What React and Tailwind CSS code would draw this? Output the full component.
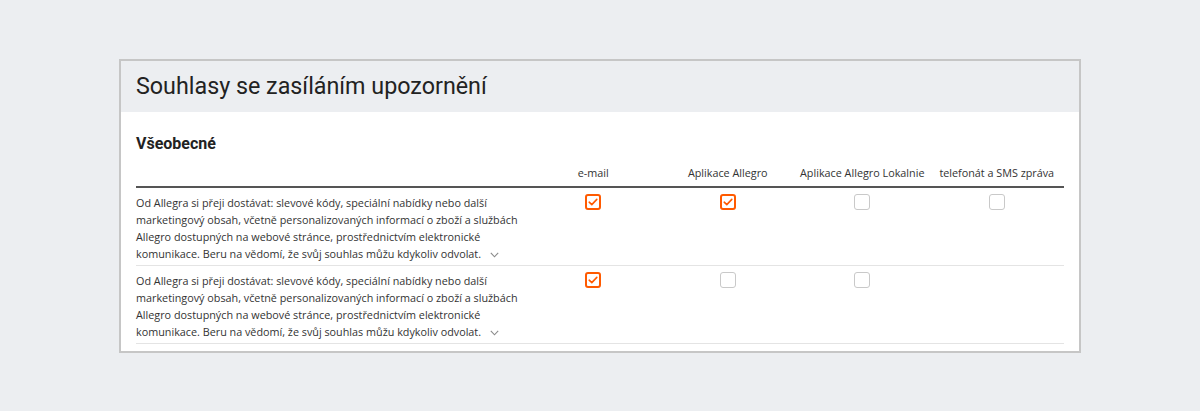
import React from "react";

const columns = ["e-mail", "Aplikace Allegro", "Aplikace Allegro Lokalnie", "telefonát a SMS zpráva"];

const consentLines = [
  "Od Allegra si přeji dostávat: slevové kódy, speciální nabídky nebo další",
  "marketingový obsah, včetně personalizovaných informací o zboží a službách",
  "Allegro dostupných na webové stránce, prostřednictvím elektronické",
  "komunikace. Beru na vědomí, že svůj souhlas můžu kdykoliv odvolat.",
];

const rows = [
  { id: 1, values: [true, true, false, false] },
  { id: 2, values: [true, false, false, null] },
];

const Checkbox = ({ checked }) => {
  if (checked) {
    return (
      <span className="flex h-4 w-4 items-center justify-center rounded-[3px] border-2 border-[#ff5a00] bg-white">
        <svg width="10" height="8" viewBox="0 0 10 8" fill="none">
          <path d="M1.2 4.2 L3.8 6.6 L8.8 1.4" stroke="#ff5a00" strokeWidth="1.6" strokeLinecap="round" strokeLinejoin="round" />
        </svg>
      </span>
    );
  }
  return <span className="block h-4 w-4 rounded-[3px] border border-[#c9c9c9] bg-white" />;
};

const Chevron = () => (
  <svg className="ml-[9px] inline-block align-middle" width="9" height="6" viewBox="0 0 9 6" fill="none">
    <path d="M0.8 0.9 L4.5 4.8 L8.2 0.9" stroke="#8a8a8a" strokeWidth="1.1" />
  </svg>
);

const App = () => {
  return (
    <div className="min-h-[411px] w-full bg-[#eceef1] px-[119px] pt-[59px]">
      <div className="border-2 border-[#c6c6c6] bg-white">
        <div className="flex h-[51px] items-center bg-[#eceef1] pl-[15px]">
          <h1 className="text-[23.3px] leading-none text-[#222222]" style={{ fontFamily: "Roboto, sans-serif" }}>
            Souhlasy se zasíláním upozornění
          </h1>
        </div>

        <div className="px-[15px] pb-[7px] pt-[22px]" style={{ fontFamily: "'Open Sans', sans-serif" }}>
          <h2 className="text-[16px] font-bold leading-[20px] text-[#222222]" style={{ fontFamily: "Roboto, sans-serif" }}>
            Všeobecné
          </h2>

          <div className="mt-[10px] flex border-b-2 border-[#555555] pb-[5px] text-[10.8px] leading-[17px] text-[#333333]">
            <div className="w-[390px] shrink-0" />
            {columns.map((c) => (
              <div key={c} className="flex-1 text-center whitespace-nowrap">
                {c}
              </div>
            ))}
          </div>

          {rows.map((row) => (
            <div key={row.id} className="flex border-b border-[#e4e4e4] pb-[3px] pt-[6px]">
              <p className="w-[390px] shrink-0 text-[10.8px] leading-[17px] text-[#333333] whitespace-nowrap">
                {consentLines.map((line, i) => (
                  <span key={i} className="block">
                    {line}
                    {i === consentLines.length - 1 && <Chevron />}
                  </span>
                ))}
              </p>
              {row.values.map((v, i) => (
                <div key={i} className="flex flex-1 justify-center">
                  {v !== null && <Checkbox checked={v} />}
                </div>
              ))}
            </div>
          ))}
        </div>
      </div>
    </div>
  );
};

export default App;
